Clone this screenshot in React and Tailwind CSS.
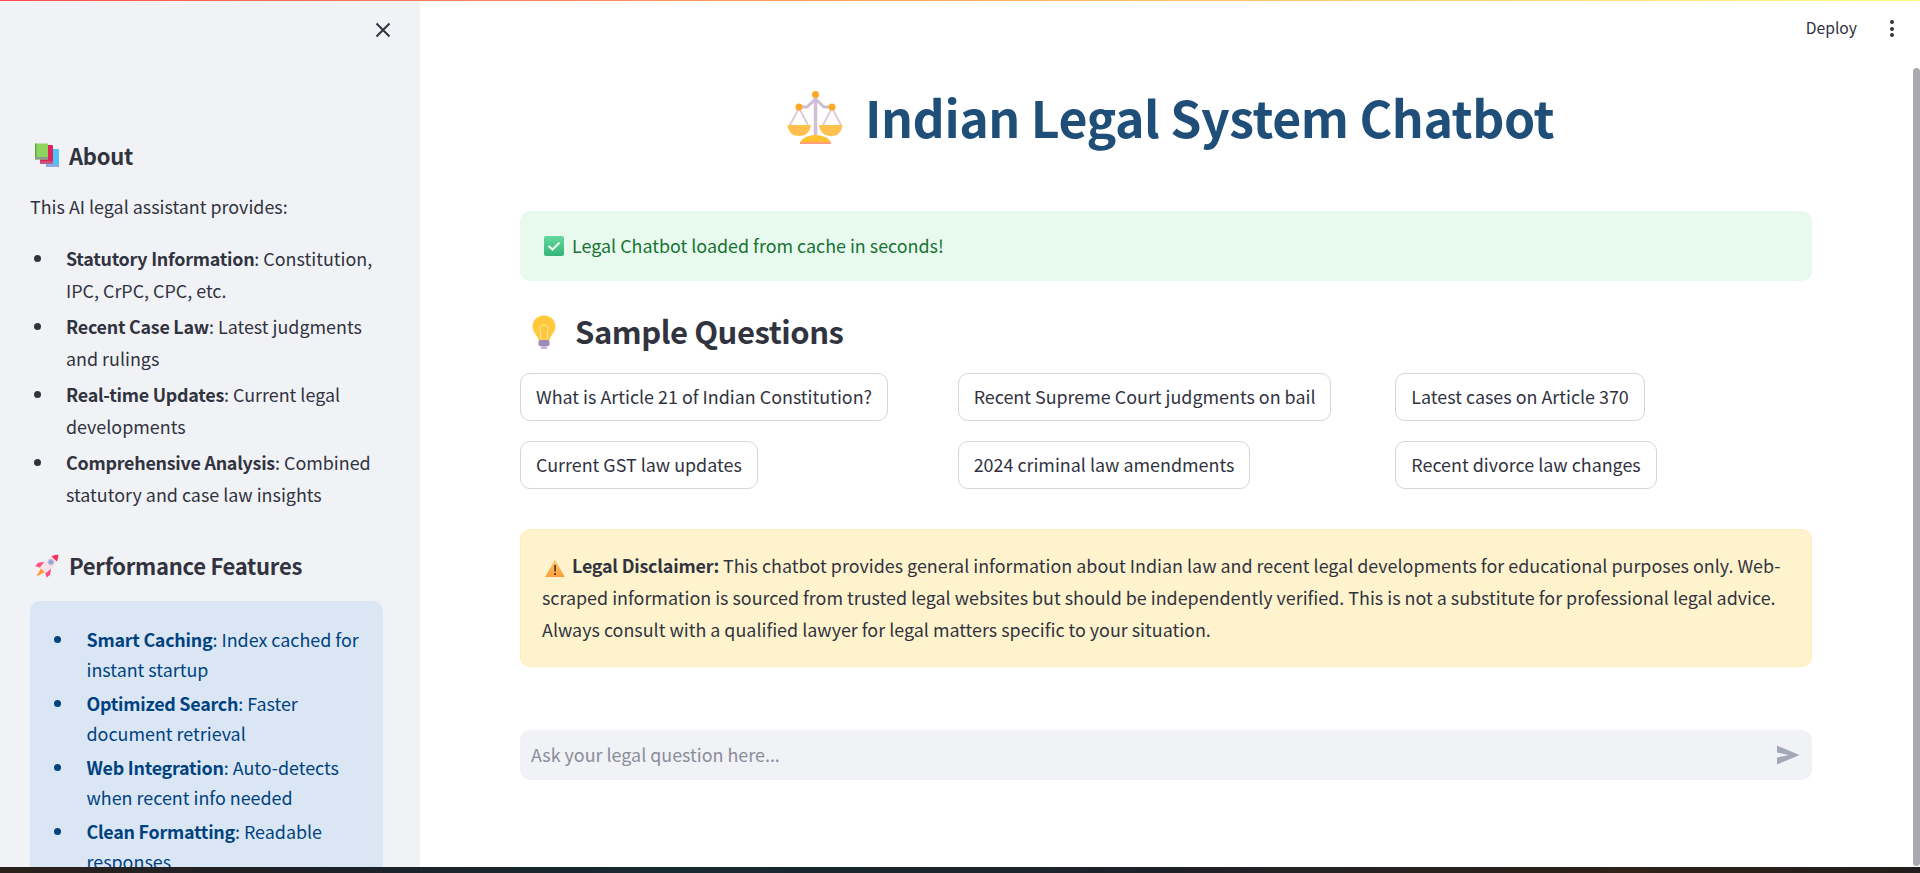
import React from "react";

const Books = () => (
  <svg width="26" height="26" viewBox="0 0 26 26" className="shrink-0">
    <rect x="12" y="6" width="13" height="18" rx="1" fill="#4fc3f7" />
    <rect x="12" y="21.500" width="13" height="2.500" fill="#8fa8e0" />
    <rect x="6" y="2" width="13" height="19" rx="1" fill="#e0245e" />
    <rect x="6" y="18.500" width="13" height="2.500" fill="#c45a86" />
    <rect x="1" y="0.500" width="13" height="16" rx="1" fill="#8fd45f" />
    <rect x="1" y="0.500" width="1.500" height="16" fill="#5aa84a" />
    <rect x="1" y="14" width="13" height="2.500" fill="#8a9a90" />
  </svg>
);

const Rocket = () => (
  <svg width="26" height="26" viewBox="0 0 26 26" className="shrink-0">
    <g transform="rotate(45 13 13)">
      <path d="M10 18 H16 L13 28 Z" fill="#ff9838" />
      <path d="M9 11 L4.500 17 L5 21.500 L9.500 19 Z" fill="#ff4f7e" />
      <path d="M17 11 L21.500 17 L21 21.500 L16.500 19 Z" fill="#ff4f7e" />
      <path d="M13 -3 C18 2 18.500 12 17 19 H9 C7.500 12 8 2 13 -3 Z" fill="#f6e4e8" />
      <path d="M13 -3 C15 -1 16.200 1 16.800 3 H9.200 C9.800 1 11 -1 13 -3 Z" fill="#f5325f" />
      <circle cx="13" cy="7.500" r="2.600" fill="#7fa9e8" stroke="#c9b7cf" strokeWidth="1" />
    </g>
  </svg>
);

const Scales = () => (
  <svg width="57" height="58" viewBox="0 0 57 58" className="shrink-0 mt-[4px]">
    <path d="M28.500 4 V50" stroke="#d3bfd4" strokeWidth="3.500" fill="none" />
    <path d="M12 17 H20 L28.500 9 L37 17 H45" stroke="#cdbcd5" strokeWidth="3" fill="none" />
    <path d="M12 18 L3 35 M12 18 L21 35 M45 18 L36 35 M45 18 L54 35" stroke="#dcc9d8" strokeWidth="1.800" fill="none" />
    <path d="M0.500 35 H24 C23 43 18 46 12 46 C6 46 1.500 43 0.500 35 Z" fill="#ffc04d" />
    <path d="M32 35 H55.500 C54.500 43 50 46 44 46 C38 46 33 43 32 35 Z" fill="#ffc04d" />
    <path d="M13 53 C14 48 22 45 28.500 45 C35 45 43 48 44 53 Z" fill="#ffc12e" />
    <rect x="13" y="52" width="31" height="2" fill="#ff9d7a" />
    <circle cx="28.500" cy="4.500" r="3.500" fill="#ffa726" />
    <circle cx="12" cy="17" r="3.500" fill="#ffa726" />
    <circle cx="45" cy="17" r="3.500" fill="#ffa726" />
  </svg>
);

const Check = () => (
  <svg width="20" height="20" viewBox="0 0 20 20" className="shrink-0">
    <defs>
      <linearGradient id="chk" x1="0" y1="0" x2="0" y2="1">
        <stop offset="0" stopColor="#62d99e" />
        <stop offset="1" stopColor="#36b37a" />
      </linearGradient>
    </defs>
    <rect width="20" height="20" rx="2" fill="url(#chk)" />
    <path d="M4.500 10 L8.500 13.500 L15.500 6.500" stroke="#eafaf0" strokeWidth="2.200" fill="none" />
  </svg>
);

const Bulb = () => (
  <svg width="24" height="34" viewBox="0 0 24 34" className="shrink-0">
    <path d="M12 0.500 C5 0.500 0.500 5.500 0.500 11.500 C0.500 17 5 19.500 6.500 25 H17.500 C19 19.500 23.500 17 23.500 11.500 C23.500 5.500 19 0.500 12 0.500 Z" fill="#ffc83d" />
    <path d="M9 25 L8 13 M15 25 L16 13 M8 13 C9 9 15 9 16 13" stroke="#ffe9a0" strokeWidth="1" fill="none" />
    <rect x="6.500" y="25" width="11" height="6" rx="1.500" fill="#a08bb8" />
    <rect x="8.500" y="31" width="7" height="3" rx="1.500" fill="#c5b5d4" />
  </svg>
);

const Warn = () => (
  <svg width="20" height="18" viewBox="0 0 20 18" className="inline-block align-[-4px] ml-[3px] mr-[3px]">
    <defs>
      <linearGradient id="wrn" x1="0" y1="0" x2="0" y2="1">
        <stop offset="0" stopColor="#ffc864" />
        <stop offset="1" stopColor="#ff9c3c" />
      </linearGradient>
    </defs>
    <path d="M10 0.500 L19.800 18 H0.200 Z" fill="url(#wrn)" />
    <rect x="9.200" y="6" width="1.800" height="6.500" fill="#5a3a28" />
    <rect x="9.200" y="14" width="1.800" height="2" fill="#5a3a28" />
  </svg>
);

const SideItem = ({ b, t }) => (
  <li className="flex">
    <span className="w-9 shrink-0 flex justify-start pl-1 pt-[13px]">
      <span className="block w-[7px] h-[7px] rounded-full bg-[#31333f]" />
    </span>
    <span><b className="font-semibold tracking-[-0.25px]">{b}</b>: {t}</span>
  </li>
);

const BlueItem = ({ b, t }) => (
  <li className="flex">
    <span className="w-[36.500px] shrink-0 pl-[4px] pt-[12px]">
      <span className="block w-[7px] h-[7px] rounded-full bg-[#004280]" />
    </span>
    <span><b className="font-semibold tracking-[-0.25px]">{b}</b>: {t}</span>
  </li>
);

const Btn = ({ children }) => (
  <div>
    <button className="h-12 px-[15px] pb-[2px] rounded-[10px] border border-[#d5d6d9] bg-white text-[#31333f] text-[17.900px] leading-[28px] whitespace-nowrap">
      {children}
    </button>
  </div>
);

export default function App() {
  return (
    <div className="relative w-[1920px] h-[873px] overflow-hidden bg-white flex flex-col text-[#31333f] font-['Noto_Sans_CJK_SC','Source_Sans_Pro',sans-serif] text-[17.900px]">
      <div className="absolute top-0 left-0 right-0 h-[1px] bg-gradient-to-r from-[#ff4b4b] to-[#fffd80] z-10" />
      <div className="flex flex-1 min-h-0">
        <aside className="w-[420px] shrink-0 bg-[#f0f2f6] overflow-hidden pl-[30px] pr-[37px]">
          <div className="flex justify-end h-[60px] mr-[-10px] pt-[20px]">
            <svg width="20" height="20" viewBox="0 0 20 20" fill="none" stroke="#31333f" strokeWidth="2">
              <path d="M3.500 3.500 L16.500 16.500 M16.500 3.500 L3.500 16.500" />
            </svg>
          </div>
          <h2 className="flex items-center gap-[9px] pl-[4px] mt-[81px] h-[30px] text-[22px] leading-[30px] font-semibold tracking-[-0.28px]">
            <Books /> <span className="mb-[2px]">About</span>
          </h2>
          <p className="mt-[19px] leading-[32px]">This AI legal assistant provides:</p>
          <ul className="mt-[20px] leading-[32px] flex flex-col gap-[4px]">
            <SideItem b="Statutory Information" t="Constitution, IPC, CrPC, CPC, etc." />
            <SideItem b="Recent Case Law" t="Latest judgments and rulings" />
            <SideItem b="Real-time Updates" t="Current legal developments" />
            <SideItem b="Comprehensive Analysis" t="Combined statutory and case law insights" />
          </ul>
          <h2 className="flex items-center gap-[9px] pl-[4px] mt-[41px] h-[30px] text-[22px] leading-[30px] font-semibold tracking-[-0.28px]">
            <Rocket /> <span className="mb-[2px]">Performance Features</span>
          </h2>
          <div className="mt-[20px] rounded-[10px] bg-[#dae6f4] px-[20px] pt-[23px] pb-[20px] text-[#004280] leading-[30px]">
            <ul className="flex flex-col gap-[4px]">
              <BlueItem b="Smart Caching" t="Index cached for instant startup" />
              <BlueItem b="Optimized Search" t="Faster document retrieval" />
              <BlueItem b="Web Integration" t="Auto-detects when recent info needed" />
              <BlueItem b="Clean Formatting" t="Readable responses" />
            </ul>
          </div>
        </aside>
        <main className="relative flex-1 min-w-0 pl-[100px] pr-[108px]">
          <span className="absolute right-[63px] top-[16px] text-[15.700px] leading-[24px]">Deploy</span>
          <div className="absolute right-[26px] top-[20px] flex flex-col gap-[2.500px]">
            <span className="block w-[4px] h-[4px] rounded-full bg-[#31333f]" />
            <span className="block w-[4px] h-[4px] rounded-full bg-[#31333f]" />
            <span className="block w-[4px] h-[4px] rounded-full bg-[#31333f]" />
          </div>
          <div className="absolute right-0 top-[68px] bottom-[1px] w-[7px] rounded-full bg-[#aaaaae]" />

          <h1 className="pt-[88px] pl-[9px] flex justify-center items-center gap-[21px] h-[146px] text-[50px] leading-[58px] font-bold tracking-[-0.43px] text-[#1f4e79]">
            <Scales />
            <span className="mb-[2px]">Indian Legal System Chatbot</span>
          </h1>
          <div className="mt-[65px] h-[70px] rounded-[10px] bg-[#e8f9ee] text-[#177233] px-[24px] flex items-center gap-[8px]">
            <Check />
            <span className="mb-[2px]">Legal Chatbot loaded from cache in seconds!</span>
          </div>
          <h2 className="mt-[28px] h-[46px] flex items-center gap-[19px] pl-[12px] text-[31px] leading-[46px] font-semibold tracking-[-0.45px]">
            <Bulb /> <span className="mb-[2px]">Sample Questions</span>
          </h2>
          <div className="mt-[18px] grid grid-cols-3 gap-x-[21px] gap-y-5">
            <Btn>What is Article 21 of Indian Constitution?</Btn>
            <Btn>Recent Supreme Court judgments on bail</Btn>
            <Btn>Latest cases on Article 370</Btn>
            <Btn>Current GST law updates</Btn>
            <Btn>2024 criminal law amendments</Btn>
            <Btn>Recent divorce law changes</Btn>
          </div>
          <div className="mt-[40px] h-[138px] rounded-[10px] bg-[#fff3cd] border border-[#ffeeba] px-[21px] pt-[19px] leading-[32px]">
            <Warn /> <b className="font-semibold tracking-[-0.2px]">Legal Disclaimer:</b> This chatbot provides general information about Indian law and recent legal developments for educational purposes only. Web-scraped information is sourced from trusted legal websites but should be independently verified. This is not a substitute for professional legal advice. Always consult with a qualified lawyer for legal matters specific to your situation.
          </div>
          <div className="mt-[63px] h-[50px] rounded-[10px] bg-[#f0f2f6] pl-[11px] pr-[12px] flex items-center justify-between text-[#8a8d9a]">
            <span className="mb-[2px]">Ask your legal question here...</span>
            <svg width="24" height="20" viewBox="0 0 24 20" fill="#a3a8b8">
              <path d="M1 0.500 L23.500 10 L1 19.500 V12.500 L13 10 L1 7.500 Z" />
            </svg>
          </div>
        </main>
      </div>
      <div className="h-[6px] shrink-0 bg-[linear-gradient(90deg,#2a211c_0%,#1d2027_15%,#172a30_35%,#1e2128_60%,#2e2219_85%,#211d1c_100%)]" />
    </div>
  );
}
